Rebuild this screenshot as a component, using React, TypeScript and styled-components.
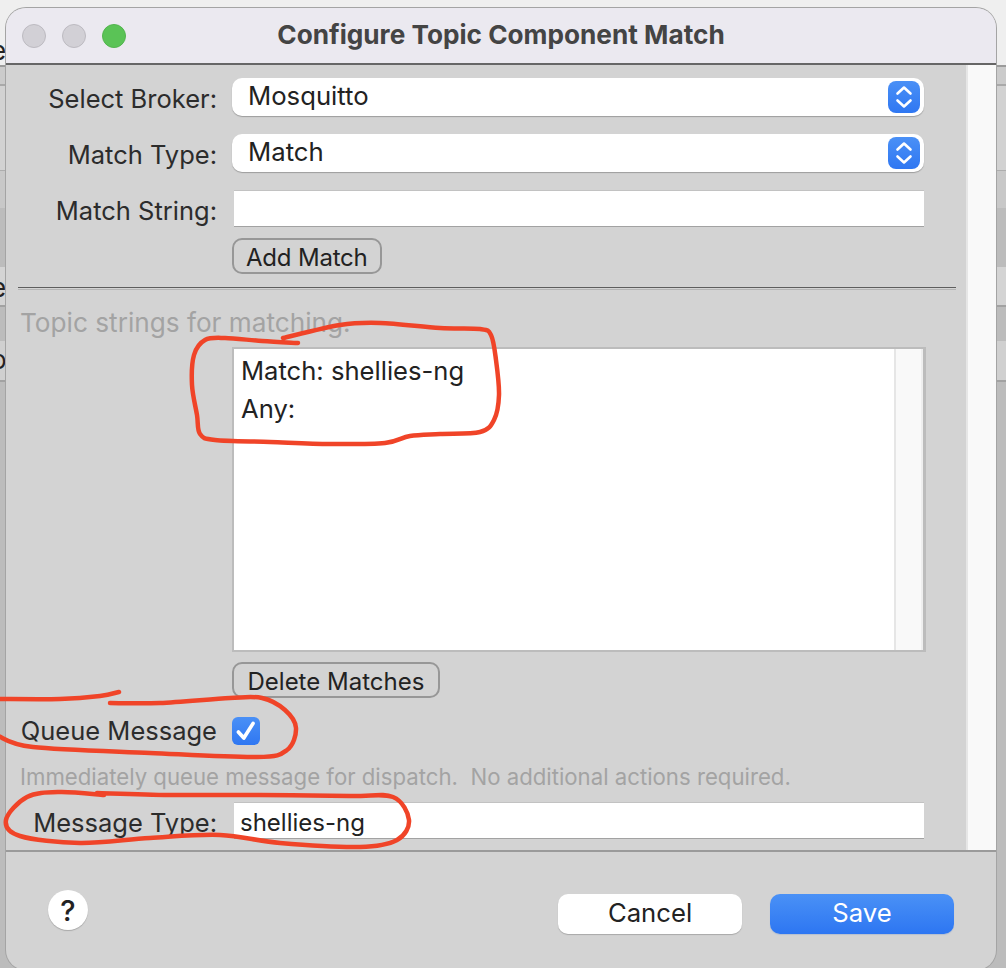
import React from 'react';
import styled, { createGlobalStyle } from 'styled-components';

const GlobalStyle = createGlobalStyle`
  html, body {
    margin: 0;
    padding: 0;
    height: 968px;
    overflow: hidden;
  }
  body {
    font-family: Inter, "Liberation Sans", sans-serif;
    color: #222;
  }
`;

const Desktop = styled.div`
  position: relative;
  width: 1006px;
  height: 968px;
  padding: 8px 10px 0 6px;
  box-sizing: border-box;
  overflow: hidden;
  background: linear-gradient(
    to bottom,
    #efefef 0 65px,
    #9b9b9b 65px 67px,
    #cbcbcb 67px 84px,
    #a9a9a9 84px 86px,
    #d2d2d2 86px 170px,
    #adadad 170px 171px,
    #c8c8c8 171px 208px,
    #bcbcbc 208px 267px,
    #d4d4d4 267px 305px,
    #a2a2a2 305px 307px,
    #bcbcbc 307px 341px,
    #d0d0d0 341px 380px,
    #a2a2a2 380px 382px,
    #bcbcbc 382px 968px
  );
`;

const BehindGlyph = styled.span<{ $top: number }>`
  position: absolute;
  left: -9px;
  top: ${(p) => p.$top}px;
  font-size: 26px;
  line-height: 28px;
  color: #222;
`;

const Window = styled.div`
  position: relative;
  height: 962px;
  border-radius: 20px;
  overflow: hidden;
  display: flex;
  flex-direction: column;
  background: #d3d3d3;
  box-shadow: 0 0 0 1px #a4a4a4;
`;

const TitleBar = styled.header`
  position: relative;
  flex: none;
  height: 57px;
  padding-bottom: 2px;
  box-sizing: border-box;
  background: #ebe9f0;
  border-bottom: 2px solid #666;
  display: flex;
  align-items: center;
  justify-content: center;
`;

const Lights = styled.div`
  position: absolute;
  left: 16px;
  top: 16px;
  display: flex;
  gap: 16px;
`;

const Light = styled.span<{ $on?: boolean }>`
  width: 24px;
  height: 24px;
  box-sizing: border-box;
  border-radius: 50%;
  background: ${(p) => (p.$on ? '#5ac356' : '#d2d0d6')};
  border: 1px solid ${(p) => (p.$on ? '#52b44e' : '#bcbac0')};
`;

const Title = styled.h1`
  margin: 0;
  font-size: 26.2px;
  font-weight: 700;
  color: #444;
`;

const Body = styled.main`
  flex: none;
  height: 787px;
  display: flex;
  border-bottom: 2px solid #9a9a9a;
  box-sizing: border-box;
`;

const Form = styled.div`
  flex: none;
  width: 960px;
  box-sizing: border-box;
  padding-top: 13px;
`;

const Gutter = styled.div`
  flex: 1;
  background: #f9f9f9;
  border-left: 2px solid #e6e6e6;
`;

const Row = styled.div<{ $gap?: number }>`
  display: grid;
  grid-template-columns: 211px 692px;
  column-gap: 15px;
  align-items: center;
  margin-top: ${(p) => p.$gap ?? 0}px;
`;

const Label = styled.label<{ $level?: boolean }>`
  text-align: right;
  font-size: 25.5px;
  line-height: 30px;
  padding-top: ${(p) => (p.$level ? 0 : 4)}px;
  color: #2c2c2c;
  white-space: nowrap;
`;

const SelectBox = styled.div`
  height: 38px;
  box-sizing: border-box;
  display: flex;
  align-items: center;
  justify-content: space-between;
  padding: 0 4px 0 16px;
  background: #fff;
  border-radius: 10px;
  font-size: 25.7px;
  color: #222;
  box-shadow: 0 1px 1px #9d9d9d;
`;

const SelectText = styled.span`
  padding-bottom: 3px;
`;

const Stepper = styled.span`
  width: 32px;
  height: 32px;
  border-radius: 8px;
  background: linear-gradient(to bottom, #4a90f6, #2f77f2);
  display: flex;
  align-items: center;
  justify-content: center;
`;

const TextField = styled.div`
  height: 37px;
  margin-left: 2px;
  box-sizing: border-box;
  padding-left: 6px;
  background: #fff;
  border-top: 1px solid #c2c2c2;
  border-bottom: 1px solid #a2a2a2;
  font-size: 24px;
  line-height: 39px;
  color: #222;
`;

const Push = styled.button<{ $tight?: boolean }>`
  justify-self: start;
  height: 36px;
  box-sizing: border-box;
  padding: ${(p) => (p.$tight ? '2px 12px 0' : '2px 13.5px 0')};
  background: #d3d3d3;
  border: 2px solid #979797;
  border-radius: 10px;
  font: 24px Inter, "Liberation Sans", sans-serif;
  letter-spacing: ${(p) => (p.$tight ? -0.2 : 0)}px;
  color: #222;
`;

const Separator = styled.hr`
  width: 938px;
  height: 3px;
  box-sizing: border-box;
  margin: 13px 0 0 12px;
  border: 0;
  border-top: 1px solid #5e5e5e;
  border-bottom: 1px solid #b5b5b5;
`;

const Hint = styled.p<{ $size: number; $gap: number }>`
  margin: ${(p) => p.$gap}px 0 0 14px;
  font-size: ${(p) => p.$size}px;
  line-height: 30px;
  color: #a3a3a3;
  white-space: pre;
`;

const ListBox = styled.div`
  grid-column: 2;
  height: 305px;
  margin-right: -2px;
  box-sizing: border-box;
  border: 2px solid #bcbcbc;
  border-right-width: 3px;
  display: flex;
  background: #fff;
`;

const ListLines = styled.div`
  flex: 1;
  padding: 3px 0 0 7px;
  font-size: 25.6px;
  line-height: 38px;
  color: #222;
`;

const ListScroll = styled.div`
  flex: none;
  width: 25px;
  background: #f9f9f9;
  border-left: 2px solid #e6e6e6;
  border-right: 2px solid #eee;
`;

const Tick = styled.span`
  width: 28px;
  height: 28px;
  border-radius: 6px;
  background: linear-gradient(to bottom, #4a90f6, #2f77f2);
  display: flex;
  align-items: center;
  justify-content: center;
`;

const Footer = styled.footer`
  flex: 1;
  display: flex;
  align-items: flex-start;
  padding: 38px 42px 0 42px;
`;

const Help = styled.button`
  width: 40px;
  height: 40px;
  padding: 0;
  border: 0;
  border-radius: 50%;
  background: #fff;
  box-shadow: 0 1px 1px #a8a8a8;
  font: 500 29px Inter, "Liberation Sans", sans-serif;
  color: #222;
`;

const Actions = styled.div`
  margin: 4px 0 0 auto;
  display: flex;
  gap: 28px;
`;

const Action = styled.button<{ $primary?: boolean }>`
  width: 184px;
  height: 40px;
  padding: 0 0 3px;
  border: 0;
  border-radius: 10px;
  font: 25.7px Inter, "Liberation Sans", sans-serif;
  color: ${(p) => (p.$primary ? '#fff' : '#222')};
  background: ${(p) => (p.$primary ? 'linear-gradient(to bottom, #4a91f6, #2d76f2)' : '#fff')};
  box-shadow: 0 1px 1px ${(p) => (p.$primary ? '#b4bfd0' : '#a8a8a8')};
`;

const Scribbles = styled.svg`
  position: absolute;
  left: 0;
  top: 0;
  pointer-events: none;
`;

const Scribble = styled.path`
  fill: none;
  stroke: #f04428;
  stroke-width: 4.5;
  stroke-linecap: round;
  stroke-linejoin: round;
`;

// hand traced pen marks, smoothed through the points
const smooth = (pts: number[][]) => {
  let d = `M${pts[0][0]} ${pts[0][1]}`;
  for (let i = 0; i < pts.length - 1; i++) {
    const a = pts[Math.max(i - 1, 0)];
    const b = pts[i];
    const c = pts[i + 1];
    const e = pts[Math.min(i + 2, pts.length - 1)];
    d += ` C${b[0] + (c[0] - a[0]) / 6} ${b[1] + (c[1] - a[1]) / 6} ${c[0] - (e[0] - b[0]) / 6} ${c[1] - (e[1] - b[1]) / 6} ${c[0]} ${c[1]}`;
  }
  return d;
};

const marks = [
  [[298, 343], [262, 341], [225, 338], [205, 340], [194, 355], [192, 385], [197, 415], [200, 434], [215, 440], [270, 442], [330, 444], [385, 443], [410, 436], [440, 434], [480, 432], [494, 420], [499, 395], [496, 360], [491, 335], [480, 329], [440, 328], [380, 323], [340, 325], [283, 338]],
  [[-2, 699], [60, 699], [100, 696], [119, 692]],
  [[110, 703], [160, 703], [230, 698], [262, 698], [285, 710], [296, 728], [287, 750], [257, 757], [150, 753], [33, 747], [-2, 736]],
  [[104, 795], [60, 792], [27, 797], [6, 820], [20, 836], [80, 843], [150, 838], [220, 835], [280, 843], [360, 847], [397, 840], [409, 820], [393, 797], [350, 796], [260, 795], [170, 795], [97, 793]],
];

const Chevrons = () => (
  <svg width="20" height="26" viewBox="0 0 20 26">
    <path d="M3.5 9.5 10 3.5l6.5 6M3.5 16.5l6.5 6 6.5-6" fill="none" stroke="#fff" strokeWidth="2.6" strokeLinecap="round" strokeLinejoin="round" />
  </svg>
);

const Check = () => (
  <svg width="24" height="24" viewBox="0 0 22 22">
    <path d="M4 12 9 17.5 17.5 4" fill="none" stroke="#fff" strokeWidth="3.4" strokeLinecap="round" strokeLinejoin="round" />
  </svg>
);

const App = () => (
  <Desktop>
    <GlobalStyle />
    <BehindGlyph $top={37}>e</BehindGlyph>
    <BehindGlyph $top={274}>e</BehindGlyph>
    <BehindGlyph $top={346}>o</BehindGlyph>
    <Window>
      <TitleBar>
        <Lights>
          <Light />
          <Light />
          <Light $on />
        </Lights>
        <Title>Configure Topic Component Match</Title>
      </TitleBar>
      <Body>
        <Form>
          <Row>
            <Label>Select Broker:</Label>
            <SelectBox>
              <SelectText>Mosquitto</SelectText>
              <Stepper><Chevrons /></Stepper>
            </SelectBox>
          </Row>
          <Row $gap={18}>
            <Label>Match Type:</Label>
            <SelectBox>
              <SelectText>Match</SelectText>
              <Stepper><Chevrons /></Stepper>
            </SelectBox>
          </Row>
          <Row $gap={18}>
            <Label>Match String:</Label>
            <TextField />
          </Row>
          <Row $gap={11}>
            <span />
            <Push $tight>Add Match</Push>
          </Row>
          <Separator />
          <Hint $size={26.2} $gap={18}>Topic strings for matching.</Hint>
          <Row $gap={9}>
            <ListBox>
              <ListLines>
                <div>Match: shellies-ng</div>
                <div>Any:</div>
              </ListLines>
              <ListScroll />
            </ListBox>
          </Row>
          <Row $gap={10}>
            <span />
            <Push>Delete Matches</Push>
          </Row>
          <Row $gap={18}>
            <Label $level>Queue Message</Label>
            <Tick><Check /></Tick>
          </Row>
          <Hint $size={22.2} $gap={16}>Immediately queue message for dispatch.  No additional actions required.</Hint>
          <Row $gap={10}>
            <Label>Message Type:</Label>
            <TextField>shellies-ng</TextField>
          </Row>
        </Form>
        <Gutter />
      </Body>
      <Footer>
        <Help>?</Help>
        <Actions>
          <Action>Cancel</Action>
          <Action $primary>Save</Action>
        </Actions>
      </Footer>
    </Window>
    <Scribbles width="1006" height="968" viewBox="0 0 1006 968">
      {marks.map((m, i) => (
        <Scribble key={i} d={smooth(m)} />
      ))}
    </Scribbles>
  </Desktop>
);

export default App;
